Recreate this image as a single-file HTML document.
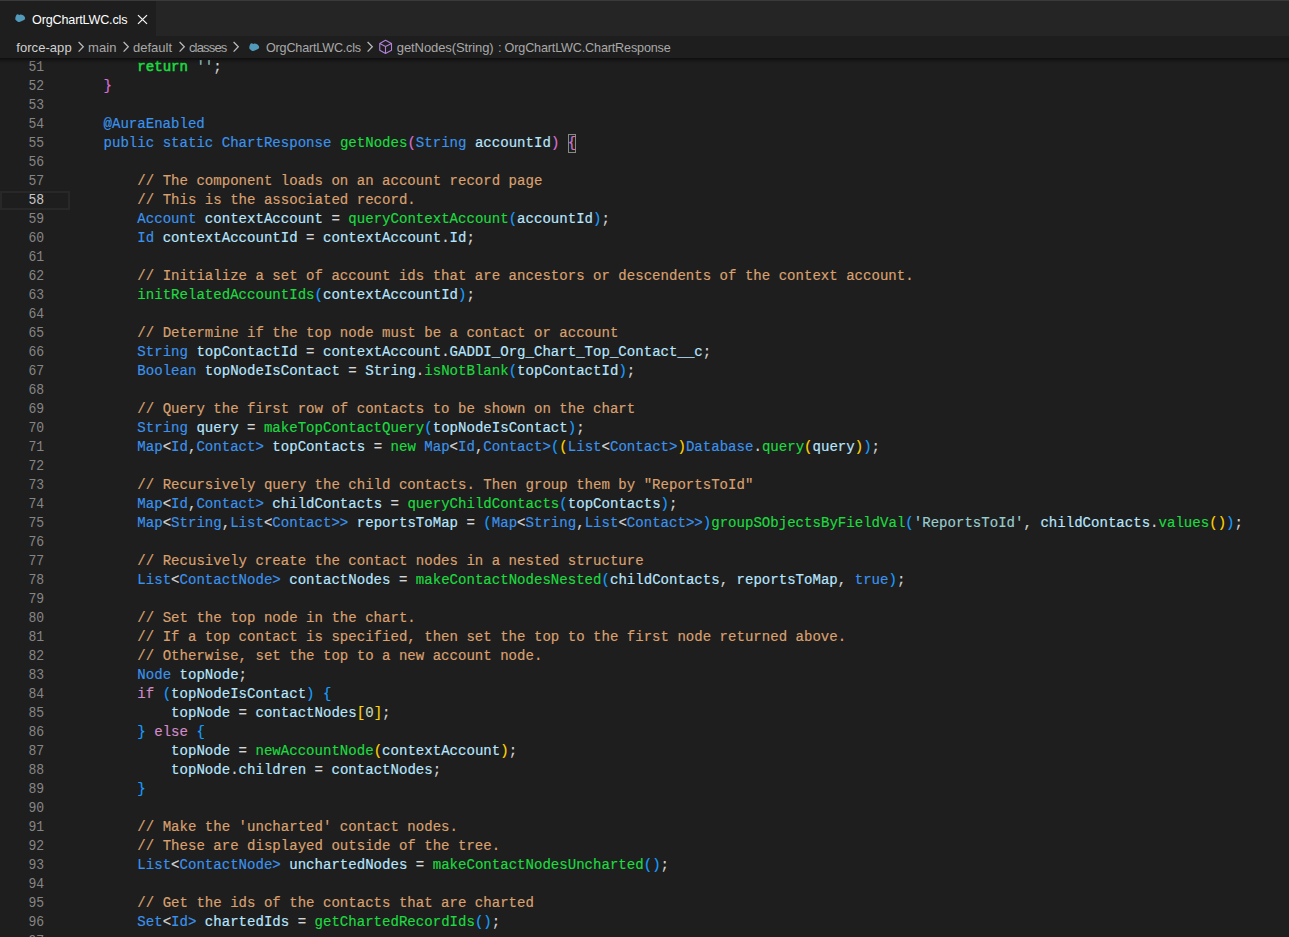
<!DOCTYPE html>
<html><head><meta charset="utf-8"><title>OrgChartLWC.cls</title>
<style>
html,body{margin:0;padding:0;}
body{width:1289px;height:937px;overflow:hidden;background:#1e1e1e;position:relative;font-family:"Liberation Sans",sans-serif;}
#topstrip{position:absolute;left:0;top:0;width:1289px;height:1px;background:#3a3a3a;}
#tabbar{position:absolute;left:0;top:1px;width:1289px;height:35px;background:#252526;}
#tab{position:absolute;left:0;top:0;width:156px;height:35px;background:#1e1e1e;}
.ui{position:absolute;white-space:pre;font-family:"Liberation Sans",sans-serif;font-size:13px;line-height:16px;transform-origin:0 0;}
#crumbs{position:absolute;left:0;top:36px;width:1289px;height:22px;background:#1e1e1e;}
#shadow{position:absolute;left:0;top:58px;width:1289px;height:6px;background:linear-gradient(to bottom,rgba(0,0,0,0.55),rgba(0,0,0,0.18) 50%,rgba(0,0,0,0));pointer-events:none;z-index:5;}
#code{position:absolute;left:0;top:0;width:1289px;height:937px;font-family:"Liberation Mono",monospace;font-size:14.07px;color:#d4d4d4;}
.row{position:absolute;left:0;width:1289px;height:19px;line-height:19px;white-space:pre;}
.row span{position:absolute;top:0;-webkit-text-stroke:0.16px currentColor;}
.ln{left:0;width:44.2px;text-align:right;color:#858585;transform:scaleX(0.93);transform-origin:100% 50%;}
.ln.act{color:#c6c6c6;}
.row span.ln{-webkit-text-stroke:0;}
.p{color:#d4d4d4}
.k{color:#3b93ec}
.f{color:#1cdb40}
.r{color:#1cdb40;-webkit-text-stroke:0.55px currentColor !important}
.n{color:#1cdb40}
.c{color:#daa170}
.v{color:#b8e6ff}
.s{color:#98cdd0}
.t{color:#d28cc8}
.m{color:#c3d8b8}
.b1{color:#da70d6}
.b2{color:#179fff}
.b3{color:#ffd700}
#curline{position:absolute;left:0;top:191px;width:66px;height:15px;border:2px solid #282828;}
#bm{position:absolute;left:567.7px;top:134px;width:8.6px;height:19px;border:1px solid #888;box-sizing:border-box;background:rgba(0,100,0,0.1);}
svg{position:absolute;overflow:visible}
</style></head>
<body>
<div id="code">
<div id="curline"></div>
<div id="bm"></div>
<div class="row" style="top:58px"><span class="ln">51</span><span class="r" style="left:137.32px">return</span><span class="s" style="left:196.40px">&#x27;&#x27;</span><span class="p" style="left:213.28px">;</span></div>
<div class="row" style="top:77px"><span class="ln">52</span><span class="b1" style="left:103.56px">}</span></div>
<div class="row" style="top:96px"><span class="ln">53</span></div>
<div class="row" style="top:115px"><span class="ln">54</span><span class="k" style="left:103.56px">@AuraEnabled</span></div>
<div class="row" style="top:134px"><span class="ln">55</span><span class="k" style="left:103.56px">public</span><span class="k" style="left:162.64px">static</span><span class="k" style="left:221.72px">ChartResponse</span><span class="f" style="left:339.88px">getNodes</span><span class="b1" style="left:407.40px">(</span><span class="k" style="left:415.84px">String</span><span class="v" style="left:474.92px">accountId</span><span class="b1" style="left:550.88px">)</span><span class="b1" style="left:567.76px">{</span></div>
<div class="row" style="top:153px"><span class="ln">56</span></div>
<div class="row" style="top:172px"><span class="ln">57</span><span class="c" style="left:137.32px">// The component loads on an account record page</span></div>
<div class="row" style="top:191px"><span class="ln act">58</span><span class="c" style="left:137.32px">// This is the associated record.</span></div>
<div class="row" style="top:210px"><span class="ln">59</span><span class="k" style="left:137.32px">Account</span><span class="v" style="left:204.84px">contextAccount</span><span class="p" style="left:331.44px">=</span><span class="f" style="left:348.32px">queryContextAccount</span><span class="b2" style="left:508.68px">(</span><span class="v" style="left:517.12px">accountId</span><span class="b2" style="left:593.08px">)</span><span class="p" style="left:601.52px">;</span></div>
<div class="row" style="top:229px"><span class="ln">60</span><span class="k" style="left:137.32px">Id</span><span class="v" style="left:162.64px">contextAccountId</span><span class="p" style="left:306.12px">=</span><span class="v" style="left:323.00px">contextAccount</span><span class="p" style="left:441.16px">.</span><span class="v" style="left:449.60px">Id</span><span class="p" style="left:466.48px">;</span></div>
<div class="row" style="top:248px"><span class="ln">61</span></div>
<div class="row" style="top:267px"><span class="ln">62</span><span class="c" style="left:137.32px">// Initialize a set of account ids that are ancestors or descendents of the context account.</span></div>
<div class="row" style="top:286px"><span class="ln">63</span><span class="f" style="left:137.32px">initRelatedAccountIds</span><span class="b2" style="left:314.56px">(</span><span class="v" style="left:323.00px">contextAccountId</span><span class="b2" style="left:458.04px">)</span><span class="p" style="left:466.48px">;</span></div>
<div class="row" style="top:305px"><span class="ln">64</span></div>
<div class="row" style="top:324px"><span class="ln">65</span><span class="c" style="left:137.32px">// Determine if the top node must be a contact or account</span></div>
<div class="row" style="top:343px"><span class="ln">66</span><span class="k" style="left:137.32px">String</span><span class="v" style="left:196.40px">topContactId</span><span class="p" style="left:306.12px">=</span><span class="v" style="left:323.00px">contextAccount</span><span class="p" style="left:441.16px">.</span><span class="v" style="left:449.60px">GADDI_Org_Chart_Top_Contact__c</span><span class="p" style="left:702.80px">;</span></div>
<div class="row" style="top:362px"><span class="ln">67</span><span class="k" style="left:137.32px">Boolean</span><span class="v" style="left:204.84px">topNodeIsContact</span><span class="p" style="left:348.32px">=</span><span class="v" style="left:365.20px">String</span><span class="p" style="left:415.84px">.</span><span class="f" style="left:424.28px">isNotBlank</span><span class="b2" style="left:508.68px">(</span><span class="v" style="left:517.12px">topContactId</span><span class="b2" style="left:618.40px">)</span><span class="p" style="left:626.84px">;</span></div>
<div class="row" style="top:381px"><span class="ln">68</span></div>
<div class="row" style="top:400px"><span class="ln">69</span><span class="c" style="left:137.32px">// Query the first row of contacts to be shown on the chart</span></div>
<div class="row" style="top:419px"><span class="ln">70</span><span class="k" style="left:137.32px">String</span><span class="v" style="left:196.40px">query</span><span class="p" style="left:247.04px">=</span><span class="f" style="left:263.92px">makeTopContactQuery</span><span class="b2" style="left:424.28px">(</span><span class="v" style="left:432.72px">topNodeIsContact</span><span class="b2" style="left:567.76px">)</span><span class="p" style="left:576.20px">;</span></div>
<div class="row" style="top:438px"><span class="ln">71</span><span class="k" style="left:137.32px">Map</span><span class="p" style="left:162.64px">&lt;</span><span class="k" style="left:171.08px">Id</span><span class="p" style="left:187.96px">,</span><span class="k" style="left:196.40px">Contact&gt;</span><span class="v" style="left:272.36px">topContacts</span><span class="p" style="left:373.64px">=</span><span class="n" style="left:390.52px">new</span><span class="k" style="left:424.28px">Map</span><span class="p" style="left:449.60px">&lt;</span><span class="k" style="left:458.04px">Id</span><span class="p" style="left:474.92px">,</span><span class="k" style="left:483.36px">Contact&gt;</span><span class="b2" style="left:550.88px">(</span><span class="b3" style="left:559.32px">(</span><span class="k" style="left:567.76px">List</span><span class="p" style="left:601.52px">&lt;</span><span class="k" style="left:609.96px">Contact&gt;</span><span class="b3" style="left:677.48px">)</span><span class="k" style="left:685.92px">Database</span><span class="p" style="left:753.44px">.</span><span class="f" style="left:761.88px">query</span><span class="b3" style="left:804.08px">(</span><span class="v" style="left:812.52px">query</span><span class="b3" style="left:854.72px">)</span><span class="b2" style="left:863.16px">)</span><span class="p" style="left:871.60px">;</span></div>
<div class="row" style="top:457px"><span class="ln">72</span></div>
<div class="row" style="top:476px"><span class="ln">73</span><span class="c" style="left:137.32px">// Recursively query the child contacts. Then group them by &quot;ReportsToId&quot;</span></div>
<div class="row" style="top:495px"><span class="ln">74</span><span class="k" style="left:137.32px">Map</span><span class="p" style="left:162.64px">&lt;</span><span class="k" style="left:171.08px">Id</span><span class="p" style="left:187.96px">,</span><span class="k" style="left:196.40px">Contact&gt;</span><span class="v" style="left:272.36px">childContacts</span><span class="p" style="left:390.52px">=</span><span class="f" style="left:407.40px">queryChildContacts</span><span class="b2" style="left:559.32px">(</span><span class="v" style="left:567.76px">topContacts</span><span class="b2" style="left:660.60px">)</span><span class="p" style="left:669.04px">;</span></div>
<div class="row" style="top:514px"><span class="ln">75</span><span class="k" style="left:137.32px">Map</span><span class="p" style="left:162.64px">&lt;</span><span class="k" style="left:171.08px">String</span><span class="p" style="left:221.72px">,</span><span class="k" style="left:230.16px">List</span><span class="p" style="left:263.92px">&lt;</span><span class="k" style="left:272.36px">Contact&gt;&gt;</span><span class="v" style="left:356.76px">reportsToMap</span><span class="p" style="left:466.48px">=</span><span class="b2" style="left:483.36px">(</span><span class="k" style="left:491.80px">Map</span><span class="p" style="left:517.12px">&lt;</span><span class="k" style="left:525.56px">String</span><span class="p" style="left:576.20px">,</span><span class="k" style="left:584.64px">List</span><span class="p" style="left:618.40px">&lt;</span><span class="k" style="left:626.84px">Contact&gt;&gt;</span><span class="b2" style="left:702.80px">)</span><span class="f" style="left:711.24px">groupSObjectsByFieldVal</span><span class="b2" style="left:905.36px">(</span><span class="s" style="left:913.80px">&#x27;ReportsToId&#x27;</span><span class="p" style="left:1023.52px">,</span><span class="v" style="left:1040.40px">childContacts</span><span class="p" style="left:1150.12px">.</span><span class="f" style="left:1158.56px">values</span><span class="b3" style="left:1209.20px">(</span><span class="b3" style="left:1217.64px">)</span><span class="b2" style="left:1226.08px">)</span><span class="p" style="left:1234.52px">;</span></div>
<div class="row" style="top:533px"><span class="ln">76</span></div>
<div class="row" style="top:552px"><span class="ln">77</span><span class="c" style="left:137.32px">// Recusively create the contact nodes in a nested structure</span></div>
<div class="row" style="top:571px"><span class="ln">78</span><span class="k" style="left:137.32px">List</span><span class="p" style="left:171.08px">&lt;</span><span class="k" style="left:179.52px">ContactNode&gt;</span><span class="v" style="left:289.24px">contactNodes</span><span class="p" style="left:398.96px">=</span><span class="f" style="left:415.84px">makeContactNodesNested</span><span class="b2" style="left:601.52px">(</span><span class="v" style="left:609.96px">childContacts</span><span class="p" style="left:719.68px">,</span><span class="v" style="left:736.56px">reportsToMap</span><span class="p" style="left:837.84px">,</span><span class="k" style="left:854.72px">true</span><span class="b2" style="left:888.48px">)</span><span class="p" style="left:896.92px">;</span></div>
<div class="row" style="top:590px"><span class="ln">79</span></div>
<div class="row" style="top:609px"><span class="ln">80</span><span class="c" style="left:137.32px">// Set the top node in the chart.</span></div>
<div class="row" style="top:628px"><span class="ln">81</span><span class="c" style="left:137.32px">// If a top contact is specified, then set the top to the first node returned above.</span></div>
<div class="row" style="top:647px"><span class="ln">82</span><span class="c" style="left:137.32px">// Otherwise, set the top to a new account node.</span></div>
<div class="row" style="top:666px"><span class="ln">83</span><span class="k" style="left:137.32px">Node</span><span class="v" style="left:179.52px">topNode</span><span class="p" style="left:238.60px">;</span></div>
<div class="row" style="top:685px"><span class="ln">84</span><span class="t" style="left:137.32px">if</span><span class="b2" style="left:162.64px">(</span><span class="v" style="left:171.08px">topNodeIsContact</span><span class="b2" style="left:306.12px">)</span><span class="b2" style="left:323.00px">{</span></div>
<div class="row" style="top:704px"><span class="ln">85</span><span class="v" style="left:171.08px">topNode</span><span class="p" style="left:238.60px">=</span><span class="v" style="left:255.48px">contactNodes</span><span class="b3" style="left:356.76px">[</span><span class="m" style="left:365.20px">0</span><span class="b3" style="left:373.64px">]</span><span class="p" style="left:382.08px">;</span></div>
<div class="row" style="top:723px"><span class="ln">86</span><span class="b2" style="left:137.32px">}</span><span class="t" style="left:154.20px">else</span><span class="b2" style="left:196.40px">{</span></div>
<div class="row" style="top:742px"><span class="ln">87</span><span class="v" style="left:171.08px">topNode</span><span class="p" style="left:238.60px">=</span><span class="f" style="left:255.48px">newAccountNode</span><span class="b3" style="left:373.64px">(</span><span class="v" style="left:382.08px">contextAccount</span><span class="b3" style="left:500.24px">)</span><span class="p" style="left:508.68px">;</span></div>
<div class="row" style="top:761px"><span class="ln">88</span><span class="v" style="left:171.08px">topNode</span><span class="p" style="left:230.16px">.</span><span class="v" style="left:238.60px">children</span><span class="p" style="left:314.56px">=</span><span class="v" style="left:331.44px">contactNodes</span><span class="p" style="left:432.72px">;</span></div>
<div class="row" style="top:780px"><span class="ln">89</span><span class="b2" style="left:137.32px">}</span></div>
<div class="row" style="top:799px"><span class="ln">90</span></div>
<div class="row" style="top:818px"><span class="ln">91</span><span class="c" style="left:137.32px">// Make the &#x27;uncharted&#x27; contact nodes.</span></div>
<div class="row" style="top:837px"><span class="ln">92</span><span class="c" style="left:137.32px">// These are displayed outside of the tree.</span></div>
<div class="row" style="top:856px"><span class="ln">93</span><span class="k" style="left:137.32px">List</span><span class="p" style="left:171.08px">&lt;</span><span class="k" style="left:179.52px">ContactNode&gt;</span><span class="v" style="left:289.24px">unchartedNodes</span><span class="p" style="left:415.84px">=</span><span class="f" style="left:432.72px">makeContactNodesUncharted</span><span class="b2" style="left:643.72px">(</span><span class="b2" style="left:652.16px">)</span><span class="p" style="left:660.60px">;</span></div>
<div class="row" style="top:875px"><span class="ln">94</span></div>
<div class="row" style="top:894px"><span class="ln">95</span><span class="c" style="left:137.32px">// Get the ids of the contacts that are charted</span></div>
<div class="row" style="top:913px"><span class="ln">96</span><span class="k" style="left:137.32px">Set</span><span class="p" style="left:162.64px">&lt;</span><span class="k" style="left:171.08px">Id&gt;</span><span class="v" style="left:204.84px">chartedIds</span><span class="p" style="left:297.68px">=</span><span class="f" style="left:314.56px">getChartedRecordIds</span><span class="b2" style="left:474.92px">(</span><span class="b2" style="left:483.36px">)</span><span class="p" style="left:491.80px">;</span></div>
<div class="row" style="top:932px"><span class="ln">97</span></div>
</div>
<div id="topstrip"></div>
<div id="tabbar">
 <div id="tab">
  <svg style="left:14.6px;top:12.9px" width="11" height="9" viewBox="0 0 11 9"><path d="M1.27 1.29 Q1.60 0.65 1.93 0.48 L2.37 0.27 Q2.70 0.10 3.21 0.39 L3.89 0.77 Q4.40 1.05 4.85 0.85 L5.45 0.59 Q5.90 0.40 6.68 0.67 L7.72 1.03 Q8.50 1.30 9.04 2.06 L9.76 3.08 Q10.30 3.85 10.09 4.43 L9.81 5.21 Q9.60 5.80 8.94 6.10 L8.06 6.50 Q7.40 6.80 6.37 7.25 L4.99 7.85 Q3.95 8.30 3.31 7.93 L2.45 7.42 Q1.80 7.05 1.32 6.60 L0.68 6.00 Q0.20 5.55 0.29 4.72 L0.41 3.62 Q0.50 2.80 0.83 2.15 Z" fill="#519aba" /></svg>
  <span class="ui" id="tabname" style="left:32.10px;top:10.70px;color:#ffffff;font-size:12.6px;letter-spacing:-0.171px;">OrgChartLWC.cls</span>
  <svg style="left:136.5px;top:12.6px" width="11" height="11" viewBox="0 0 11 11"><path d="M1 1.1 L10 9.9 M10 1.1 L1 9.9" stroke="#f4f4f4" stroke-width="1.3" fill="none"/></svg>
 </div>
</div>
<div id="crumbs">
 <span class="ui" id="c1" style="left:16.30px;top:4.30px;color:#d0d0d0;letter-spacing:0.050px;">force-app</span>
 <svg style="left:77.7px;top:5.4px" width="8" height="12" viewBox="0 0 8 12"><path d="M0.6 1.0 L5.3 5.8 L0.6 10.6" fill="none" stroke="#b8b8b8" stroke-width="1.3"/></svg>
 <span class="ui" id="c2" style="left:88.10px;top:4.30px;color:#a9a9a9;letter-spacing:0.067px;">main</span>
 <svg style="left:122.7px;top:5.4px" width="8" height="12" viewBox="0 0 8 12"><path d="M0.6 1.0 L5.3 5.8 L0.6 10.6" fill="none" stroke="#b8b8b8" stroke-width="1.3"/></svg>
 <span class="ui" id="c3" style="left:133.00px;top:4.30px;color:#a9a9a9;">default</span>
 <svg style="left:178.5px;top:5.4px" width="8" height="12" viewBox="0 0 8 12"><path d="M0.6 1.0 L5.3 5.8 L0.6 10.6" fill="none" stroke="#b8b8b8" stroke-width="1.3"/></svg>
 <span class="ui" id="c4" style="left:188.90px;top:4.30px;color:#a9a9a9;letter-spacing:-0.817px;">classes</span>
 <svg style="left:233.3px;top:5.4px" width="8" height="12" viewBox="0 0 8 12"><path d="M0.6 1.0 L5.3 5.8 L0.6 10.6" fill="none" stroke="#b8b8b8" stroke-width="1.3"/></svg>
 <span class="ui" id="c5" style="left:266.00px;top:3.70px;color:#a9a9a9;font-size:12.6px;letter-spacing:-0.186px;">OrgChartLWC.cls</span>
 <svg style="left:366.8px;top:5.4px" width="8" height="12" viewBox="0 0 8 12"><path d="M0.6 1.0 L5.3 5.8 L0.6 10.6" fill="none" stroke="#b8b8b8" stroke-width="1.3"/></svg>
 <span class="ui" id="c6" style="left:396.80px;top:4.30px;color:#a9a9a9;letter-spacing:-0.093px;">getNodes(String)</span>
 <span class="ui" id="c7" style="left:498.00px;top:4.30px;color:#a9a9a9;">:</span>
 <span class="ui" id="c8" style="left:504.60px;top:3.70px;color:#a9a9a9;font-size:12.6px;letter-spacing:-0.154px;">OrgChartLWC.ChartResponse</span>
 <svg style="left:248.5px;top:6.8px" width="11" height="9" viewBox="0 0 11 9"><path d="M1.27 1.29 Q1.60 0.65 1.93 0.48 L2.37 0.27 Q2.70 0.10 3.21 0.39 L3.89 0.77 Q4.40 1.05 4.85 0.85 L5.45 0.59 Q5.90 0.40 6.68 0.67 L7.72 1.03 Q8.50 1.30 9.04 2.06 L9.76 3.08 Q10.30 3.85 10.09 4.43 L9.81 5.21 Q9.60 5.80 8.94 6.10 L8.06 6.50 Q7.40 6.80 6.37 7.25 L4.99 7.85 Q3.95 8.30 3.31 7.93 L2.45 7.42 Q1.80 7.05 1.32 6.60 L0.68 6.00 Q0.20 5.55 0.29 4.72 L0.41 3.62 Q0.50 2.80 0.83 2.15 Z" fill="#519aba" /></svg>
 <svg style="left:379px;top:3px" width="14" height="16" viewBox="0 0 14 16"><path d="M6.5 1.3 L12.5 4.6 L12.5 11.3 L6.5 14.5 L0.75 11.3 L0.75 4.6 Z M0.75 4.6 L6.5 7.6 L12.5 4.6 M6.5 7.6 L6.5 14.5" fill="none" stroke="#b180d7" stroke-width="1.1" stroke-linejoin="round"/></svg>
</div>
<div id="shadow"></div>
</body></html>
